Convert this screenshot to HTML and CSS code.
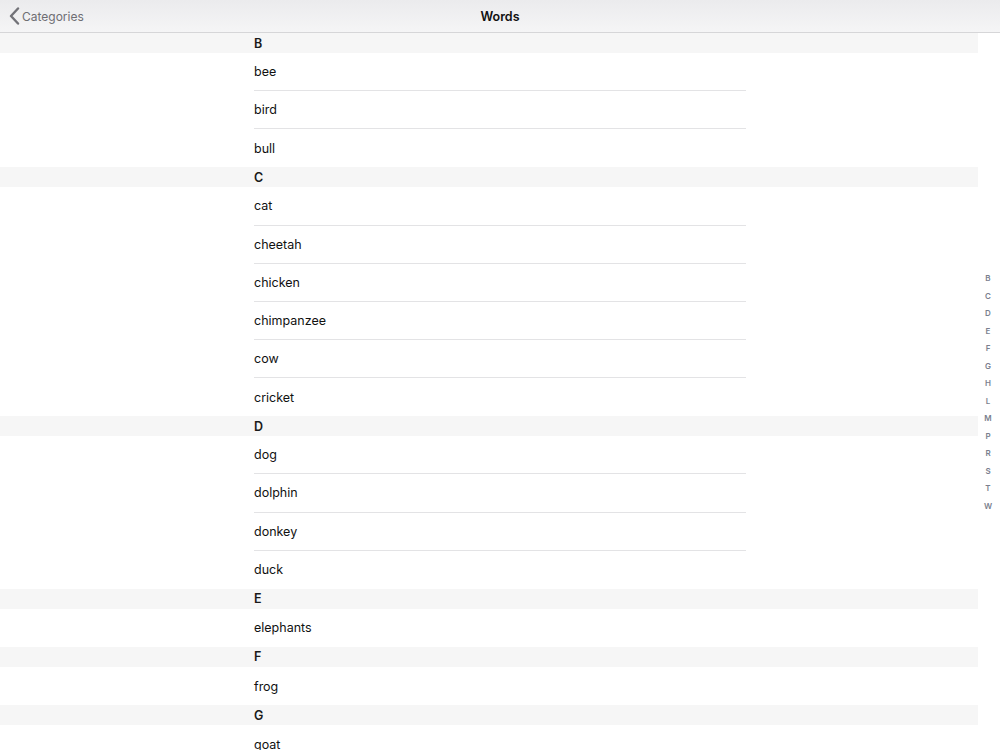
FILE: index.html
```html
<!DOCTYPE html>
<html>
<head>
<meta charset="utf-8">
<link rel="stylesheet" href="styles.css">
</head>
<body>
<div class="nav">
  <div class="back">
    <svg class="chev" width="11" height="18" viewBox="0 0 11 18"><path d="M9 1.5 L2 9 L9 16.5" fill="none" stroke="#727278" stroke-width="2.4" stroke-linecap="round" stroke-linejoin="round"/></svg>
    <span>Categories</span>
  </div>
  <div class="title">Words</div>
</div>
<div class="list">
  <div class="hdr"><div class="in">B</div></div>
  <div class="row"><div class="in">bee</div></div>
  <div class="row"><div class="in">bird</div></div>
  <div class="row last"><div class="in">bull</div></div>
  <div class="hdr"><div class="in">C</div></div>
  <div class="row"><div class="in">cat</div></div>
  <div class="row"><div class="in">cheetah</div></div>
  <div class="row"><div class="in">chicken</div></div>
  <div class="row"><div class="in">chimpanzee</div></div>
  <div class="row"><div class="in">cow</div></div>
  <div class="row last"><div class="in">cricket</div></div>
  <div class="hdr"><div class="in">D</div></div>
  <div class="row"><div class="in">dog</div></div>
  <div class="row"><div class="in">dolphin</div></div>
  <div class="row"><div class="in">donkey</div></div>
  <div class="row last"><div class="in">duck</div></div>
  <div class="hdr"><div class="in">E</div></div>
  <div class="row last"><div class="in">elephants</div></div>
  <div class="hdr"><div class="in">F</div></div>
  <div class="row last"><div class="in">frog</div></div>
  <div class="hdr"><div class="in">G</div></div>
  <div class="row last"><div class="in">goat</div></div>
</div>
<div class="index">
  <span>B</span><span>C</span><span>D</span><span>E</span><span>F</span><span>G</span><span>H</span><span>L</span><span>M</span><span>P</span><span>R</span><span>S</span><span>T</span><span>W</span>
</div>
</body>
</html>
```
FILE: styles.css
```css
html, body {
  margin: 0;
  padding: 0;
  height: 750px;
  overflow: hidden;
  background: #fff;
  font-family: "Inter", "Liberation Sans", sans-serif;
  color: #111;
}
.nav {
  height: 32px;
  border-bottom: 1px solid #d6d6d8;
  background: linear-gradient(#ebebed, #f5f5f6);
  display: flex;
  align-items: center;
  justify-content: center;
  position: relative;
}
.back {
  position: absolute;
  left: 9px;
  top: 0;
  height: 32px;
  display: flex;
  align-items: center;
  gap: 2px;
  color: #6e6e73;
  font-size: 12px;
}
.chev { display: block; }
.title {
  font-size: 12.5px;
  font-weight: 600;
  color: #111;
}
.list {
  display: flex;
  flex-direction: column;
}
.hdr {
  height: 20px;
  margin-right: 22px;
  padding-left: 254px;
  background: #f6f6f6;
  display: flex;
  align-items: center;
}
.hdr .in {
  font-size: 12.5px;
  font-weight: 600;
  color: #1a1a1a;
}
.row {
  height: 38.15px;
  padding-left: 254px;
  display: flex;
}
.row .in {
  width: 492px;
  box-sizing: border-box;
  border-bottom: 1px solid #e3e3e5;
  display: flex;
  align-items: center;
  font-size: 12.5px;
  color: #111;
}
.row.last .in {
  border-bottom: none;
}
.index {
  position: absolute;
  right: 0;
  top: 270px;
  width: 24px;
  display: flex;
  flex-direction: column;
  align-items: center;
  font-size: 8px;
  font-weight: 600;
  color: #7b7f8e;
}
.index span {
  height: 17.5px;
  line-height: 17.5px;
}
```
